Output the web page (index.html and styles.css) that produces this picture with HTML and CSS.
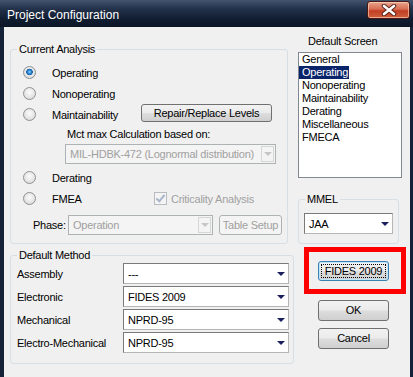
FILE: index.html
```html
<!DOCTYPE html>
<html lang="en">
<head>
    <meta charset="UTF-8">
    <title>Project Configuration</title>
    <link rel="stylesheet" href="styles.css">
</head>
<body>
    <div class="window">
        <div class="titlebar">
            <span class="title">Project Configuration</span>
            <div class="close-btn">
                <svg width="16" height="12" viewBox="0 0 16 12" xmlns="http://www.w3.org/2000/svg">
                    <path d="M3,2 L13,10 M13,2 L3,10" stroke="#5a2418" stroke-width="4.5" stroke-linecap="round" />
                    <path d="M3,2 L13,10 M13,2 L3,10" stroke="#ffffff" stroke-width="2.6" stroke-linecap="round" />
                </svg>
            </div>
        </div>

        <div class="client">
            <div class="left-col">
                <div class="group analysis">
                    <span class="group-label">Current Analysis</span>
                    <div class="opt-row">
                        <span class="radio checked"></span>
                        <span class="opt-label">Operating</span>
                    </div>
                    <div class="opt-row">
                        <span class="radio"></span>
                        <span class="opt-label">Nonoperating</span>
                    </div>
                    <div class="opt-row">
                        <span class="radio"></span>
                        <span class="opt-label">Maintainability</span>
                        <div class="btn repair-btn">Repair/Replace Levels</div>
                    </div>
                    <div class="mct-row">Mct max Calculation based on:</div>
                    <div class="combo disabled mct-combo">
                        <span class="combo-text">MIL-HDBK-472 (Lognormal distribution)</span>
                        <span class="arrow-box"><span class="arrow"></span></span>
                    </div>
                    <div class="opt-row">
                        <span class="radio"></span>
                        <span class="opt-label">Derating</span>
                    </div>
                    <div class="opt-row">
                        <span class="radio"></span>
                        <span class="opt-label">FMEA</span>
                        <span class="checkbox"></span>
                        <span class="check-label">Criticality Analysis</span>
                    </div>
                    <div class="phase-row">
                        <span class="phase-label">Phase:</span>
                        <div class="combo disabled phase-combo">
                            <span class="combo-text">Operation</span>
                            <span class="arrow-box"><span class="arrow"></span></span>
                        </div>
                        <div class="btn disabled table-btn">Table Setup</div>
                    </div>
                </div>

                <div class="group method">
                    <span class="group-label">Default Method</span>
                    <div class="method-row">
                        <span class="method-label">Assembly</span>
                        <div class="combo method-combo">
                            <span class="combo-text">---</span>
                            <span class="arrow"></span>
                        </div>
                    </div>
                    <div class="method-row">
                        <span class="method-label">Electronic</span>
                        <div class="combo method-combo">
                            <span class="combo-text">FIDES 2009</span>
                            <span class="arrow"></span>
                        </div>
                    </div>
                    <div class="method-row">
                        <span class="method-label">Mechanical</span>
                        <div class="combo method-combo">
                            <span class="combo-text">NPRD-95</span>
                            <span class="arrow"></span>
                        </div>
                    </div>
                    <div class="method-row">
                        <span class="method-label">Electro-Mechanical</span>
                        <div class="combo method-combo">
                            <span class="combo-text">NPRD-95</span>
                            <span class="arrow"></span>
                        </div>
                    </div>
                </div>
            </div>

            <div class="right-col">
                <div class="screen-label">Default Screen</div>
                <div class="listbox">
                    <div class="list-item">General</div>
                    <div class="list-item"><span class="selected">Operating</span></div>
                    <div class="list-item">Nonoperating</div>
                    <div class="list-item">Maintainability</div>
                    <div class="list-item">Derating</div>
                    <div class="list-item">Miscellaneous</div>
                    <div class="list-item">FMECA</div>
                </div>

                <div class="group mmel">
                    <span class="group-label">MMEL</span>
                    <div class="combo mmel-combo">
                        <span class="combo-text">JAA</span>
                        <span class="arrow"></span>
                    </div>
                </div>

                <div class="highlight">
                    <div class="btn focused fides-btn"><span class="focus-ring">FIDES 2009</span></div>
                </div>

                <div class="btn dialog-btn ok-btn">OK</div>
                <div class="btn dialog-btn cancel-btn">Cancel</div>
            </div>
        </div>
    </div>
</body>
</html>
```

FILE: styles.css
```css
body {
    margin: 0;
    background-color: #0f1a2c;
    font-family: 'Liberation Sans', Arial, sans-serif;
    font-size: 11px;
    letter-spacing: -0.25px;
    color: #000000;
}
.window {
    width: 413px;
    height: 377px;
    background: #16223a;
    overflow: hidden;
}
.titlebar {
    height: 27px;
    display: flex;
    align-items: flex-start;
    background: linear-gradient(180deg, #44546e 0%, #25344d 30%, #111d31 70%, #0b1526 100%);
}
.title {
    color: #ffffff;
    font-size: 12px;
    letter-spacing: 0;
    line-height: 14px;
    margin: 8px 0 0 7px;
}
.close-btn {
    margin: 1px 3px 0 auto;
    width: 43px;
    height: 18px;
    box-sizing: border-box;
    border: 1px solid #4a1a12;
    border-radius: 3px;
    box-shadow: inset 0 0 0 1px rgba(255, 220, 200, 0.6);
    background: linear-gradient(180deg, #e8a58f 0%, #d76c50 45%, #c13f24 55%, #d1603f 100%);
    display: flex;
    justify-content: center;
    align-items: center;
}
.client {
    margin-left: 4px;
    width: 406px;
    height: 350px;
    background: #f0f0f0;
    display: flex;
    padding-left: 6px;
    box-sizing: border-box;
}
.left-col {
    width: 284px;
    display: flex;
    flex-direction: column;
    align-items: flex-start;
}
.group {
    position: relative;
    box-sizing: border-box;
    border: 1px solid #d5dfe5;
    border-radius: 3px;
}
.group-label {
    position: absolute;
    top: -7px;
    left: 6px;
    padding: 0 2px;
    line-height: 13px;
    background: #f0f0f0;
}
.analysis {
    width: 278px;
    height: 195px;
    margin-top: 22px;
    padding-top: 12px;
}
.opt-row {
    height: 21px;
    display: flex;
    align-items: center;
    padding-left: 12px;
}
.radio {
    width: 13px;
    height: 13px;
    flex-shrink: 0;
    box-sizing: border-box;
    border: 1px solid #8f9092;
    border-radius: 50%;
    background: radial-gradient(circle at 50% 40%, #fbfbfb 0%, #e6e6e6 55%, #cfcfcf 100%);
}
.radio.checked {
    background:
        radial-gradient(circle at 50% 45%, #9fdcff 0, #2c8ad6 1.6px, #155fa8 3px, transparent 3.6px),
        radial-gradient(circle at 50% 40%, #fbfbfb 0%, #e6e6e6 55%, #cfcfcf 100%);
}
.opt-label {
    margin-left: 16px;
    width: 102px;
    flex-shrink: 0;
}
.repair-btn {
    width: 131px;
    height: 18px;
    margin-left: -13px;
    margin-top: -3px;
}
.btn {
    box-sizing: border-box;
    border: 1px solid #707070;
    border-radius: 3px;
    background: linear-gradient(180deg, #f2f2f2 0%, #ebebeb 48%, #dddddd 52%, #cfcfcf 100%);
    display: flex;
    justify-content: center;
    align-items: center;
    line-height: 13px;
}
.btn.disabled {
    border-color: #adb2b5;
    background: #f4f4f4;
    color: #a0a0a0;
}
.mct-row {
    height: 19px;
    line-height: 19px;
    padding-left: 56px;
}
.combo {
    box-sizing: border-box;
    border: 1px solid #7a7a7a;
    border-bottom-color: #b5b5b5;
    border-right-color: #b5b5b5;
    background: #ffffff;
    display: flex;
    align-items: center;
}
.combo-text {
    flex: 1;
    padding-left: 4px;
    white-space: nowrap;
    overflow: hidden;
}
.combo.disabled {
    border-color: #adb2b5;
    background: #f4f4f4;
    color: #a0a0a0;
}
.arrow {
    width: 0;
    height: 0;
    border-left: 4px solid transparent;
    border-right: 4px solid transparent;
    border-top: 4px solid #1b1f5e;
    margin-right: 3px;
}
.arrow-box {
    width: 13px;
    height: 16px;
    flex-shrink: 0;
    box-sizing: border-box;
    border: 1px solid #d6d6d6;
    margin-right: 1px;
    display: flex;
    justify-content: center;
    align-items: center;
}
.arrow-box .arrow {
    border-top-color: #c6c6c6;
    margin-right: 0;
}
.mct-combo {
    width: 211px;
    height: 20px;
    margin-left: 54px;
    margin-bottom: 3px;
}
.checkbox {
    width: 13px;
    height: 13px;
    flex-shrink: 0;
    box-sizing: border-box;
    border: 1px solid #b8bcc0;
    background: #f4f4f4;
    position: relative;
}
.checkbox::after {
    content: '';
    position: absolute;
    left: 3px;
    top: 0px;
    width: 3px;
    height: 7px;
    border: solid #a9b6cc;
    border-width: 0 2px 2px 0;
    transform: rotate(40deg);
}
.check-label {
    margin-left: 4px;
    color: #a0a0a0;
    white-space: nowrap;
}
.phase-row {
    display: flex;
    align-items: center;
    margin-top: 6px;
    padding-left: 22px;
}
.phase-label {
    width: 35px;
}
.phase-combo {
    width: 145px;
    height: 20px;
}
.table-btn {
    width: 63px;
    height: 20px;
    margin-left: 6px;
}
.method {
    width: 284px;
    height: 109px;
    margin-top: 11px;
    padding-top: 7px;
}
.method-row {
    height: 21px;
    margin-bottom: 2px;
    display: flex;
    align-items: center;
    padding-left: 6px;
}
.method-label {
    width: 106px;
}
.method-combo {
    width: 166px;
    height: 21px;
}
.right-col {
    margin-left: 4px;
    width: 108px;
    display: flex;
    flex-direction: column;
    align-items: flex-start;
}
.screen-label {
    margin-top: 8px;
    padding-left: 10px;
    line-height: 13px;
}
.listbox {
    margin-top: 4px;
    width: 104px;
    height: 126px;
    box-sizing: border-box;
    border: 1px solid #828790;
    background: #ffffff;
}
.list-item {
    line-height: 13px;
    height: 13px;
    padding-left: 3px;
}
.list-item .selected {
    display: inline-block;
    margin-left: -3px;
    padding: 0 1px 0 3px;
    background: #0a246a;
    color: #ffffff;
}
.mmel {
    width: 101px;
    height: 45px;
    margin-top: 21px;
    padding: 13px 0 0 5px;
}
.mmel-combo {
    width: 89px;
    height: 21px;
}
.highlight {
    margin: 3px 0 0 6px;
    width: 102px;
    height: 47px;
    box-sizing: border-box;
    border: 5px solid #ff0000;
    padding: 9px 0 0 9px;
}
.fides-btn {
    width: 71px;
    height: 20px;
}
.btn.focused {
    border-color: #3c7fb1;
    box-shadow: inset 0 0 0 1px #bde6fd;
}
.focus-ring {
    display: flex;
    justify-content: center;
    align-items: center;
    width: 65px;
    height: 14px;
    box-sizing: border-box;
    border: 1px dotted #000000;
}
.dialog-btn {
    width: 71px;
    height: 21px;
    margin-left: 20px;
}
.ok-btn {
    margin-top: 6px;
}
.cancel-btn {
    margin-top: 7px;
}
```
